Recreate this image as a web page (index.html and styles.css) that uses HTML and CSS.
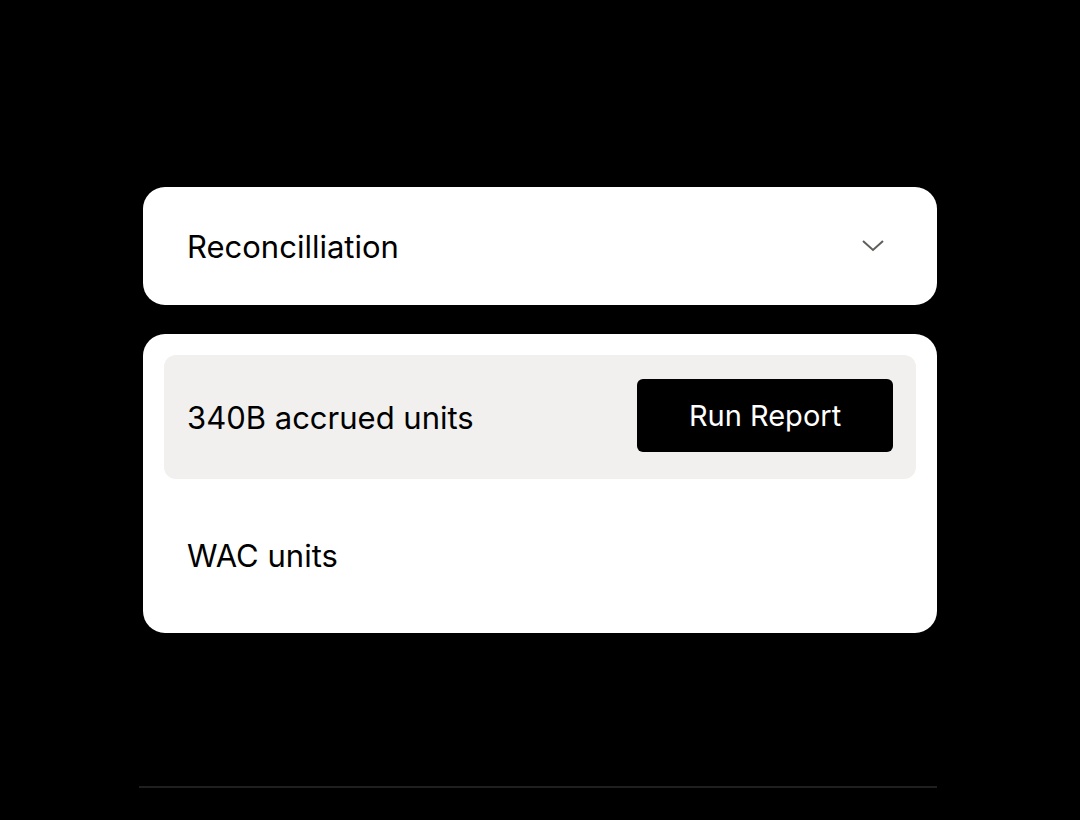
FILE: index.html
```html
<!DOCTYPE html>
<html lang="en">
<head>
    <meta charset="UTF-8">
    <meta name="viewport" content="width=device-width, initial-scale=1.0">
    <title>Reconcilliation</title>
    <link rel="stylesheet" href="styles.css">
</head>
<body>
    <main class="panel">

        <div class="select">
            <span class="select-label">Reconcilliation</span>
            <svg class="chevron" width="24" height="14" viewBox="0 0 24 14">
                <path d="M2 2 L12 11 L22 2" fill="none" stroke="#5f5e5a" stroke-width="2"/>
            </svg>
        </div>

        <div class="card">
            <div class="row row-active">
                <span class="row-label">340B accrued units</span>
                <button type="button" class="btn">Run Report</button>
            </div>
            <div class="row">
                <span class="row-label">WAC units</span>
            </div>
        </div>

    </main>

    <hr class="divider">
</body>
</html>
```

FILE: styles.css
```css
body {
    font-family: Inter, "Liberation Sans", sans-serif;
    background-color: #000;
    margin: 0;
    padding: 187px 143px 0;
    color: #000;
}

.panel {
    display: flex;
    flex-direction: column;
    gap: 29px;
}

.select {
    background-color: #fff;
    border-radius: 22px;
    height: 118px;
    padding: 0 52px 0 44px;
    display: flex;
    align-items: center;
    justify-content: space-between;
}

.select-label,
.row-label {
    font-size: 31px;
}

.chevron {
    display: block;
}

.card {
    background-color: #fff;
    border-radius: 22px;
    padding: 21px 21px 16px;
}

.row {
    height: 124px;
    padding: 0 23px 0 23px;
    display: flex;
    align-items: center;
    justify-content: space-between;
    border-radius: 12px;
    margin-top: 14px;
}

.row-active {
    background-color: #f1f0ee;
    margin-top: 0;
}

.btn {
    width: 256px;
    height: 73px;
    margin-bottom: 4px;
    background-color: #000;
    color: #fff;
    border: none;
    border-radius: 6px;
    font-family: inherit;
    font-size: 29px;
    cursor: pointer;
}

.divider {
    border: none;
    border-top: 2px solid #1f1f1f;
    margin: 153px 0 0 -4px;
}
```
